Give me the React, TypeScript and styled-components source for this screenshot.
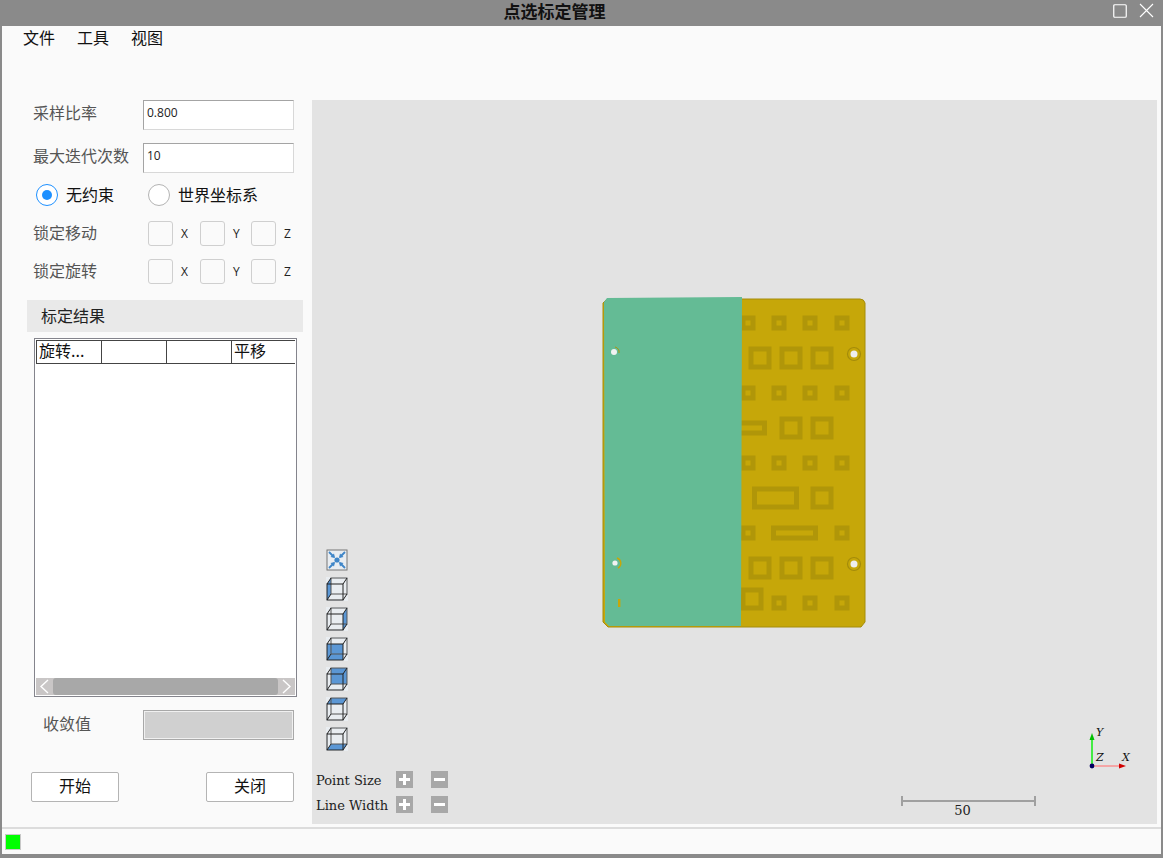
import React from "react";
import styled, { createGlobalStyle } from "styled-components";

const GlobalStyle = createGlobalStyle`
  html, body {
    margin: 0;
    padding: 0;
    background: #8a8a8a;
  }
  * {
    box-sizing: border-box;
  }
`;

const CJK = `"Noto Sans CJK SC", "Noto Sans", sans-serif`;
const SERIF = `"DejaVu Serif", "Liberation Serif", serif`;

const Window = styled.div`
  width: 1163px;
  height: 858px;
  display: flex;
  flex-direction: column;
  background: #8a8a8a;
  font-family: ${CJK};
  overflow: hidden;
`;

const TitleBar = styled.div`
  height: 26px;
  flex: none;
  display: flex;
  align-items: flex-start;
`;

const Title = styled.div`
  width: 1109px;
  text-align: center;
  font-size: 17px;
  font-weight: 700;
  color: #111;
  line-height: 21px;
`;

const WindowButtons = styled.div`
  display: flex;
  align-items: center;
  gap: 12px;
  margin-left: 4px;
  padding-top: 3px;
`;

const Body = styled.div`
  flex: 1;
  min-height: 0;
  margin: 0 2px 4px 2px;
  display: flex;
  flex-direction: column;
  background: #fafafa;
`;

const MenuBar = styled.div`
  height: 74px;
  flex: none;
  display: flex;
  align-items: flex-start;
  gap: 22px;
  padding-left: 21px;
`;

const MenuItem = styled.div`
  font-size: 16px;
  line-height: 22px;
  color: #111;
`;

const Main = styled.div`
  flex: 1;
  min-height: 0;
  display: flex;
`;

const SidePanel = styled.div`
  width: 310px;
  flex: none;
  display: flex;
  flex-direction: column;
`;

const FieldRow = styled.div`
  display: flex;
  align-items: center;
  height: 30px;
  margin-bottom: 13px;
  padding-left: 31px;
`;

const Label = styled.div<{ $width: number; $lift: number }>`
  width: ${(p) => p.$width}px;
  flex: none;
  margin-bottom: ${(p) => p.$lift}px;
  font-size: 16px;
  line-height: 24px;
  color: #555;
  white-space: nowrap;
`;

const NumberInput = styled.div`
  width: 151px;
  height: 30px;
  display: flex;
  align-items: center;
  padding: 0 0 6px 3px;
  background: #fff;
  border: 1px solid #d8d8d8;
  border-top-color: #a4a4a4;
  border-left-color: #a4a4a4;
  font-family: "Open Sans", sans-serif;
  font-size: 12px;
  color: #222;
`;

const RadioRow = styled.div`
  display: flex;
  align-items: center;
  height: 24px;
  margin-top: -3px;
  padding-left: 34px;
`;

const RadioItem = styled.div<{ $width: number }>`
  width: ${(p) => p.$width}px;
  display: flex;
  align-items: center;
  gap: 8px;
  font-size: 16px;
  line-height: 24px;
  color: #111;
`;

const RadioText = styled.span`
  margin-bottom: 3px;
`;

const RadioCircle = styled.span<{ $checked?: boolean }>`
  width: 22px;
  height: 22px;
  flex: none;
  border-radius: 50%;
  display: flex;
  align-items: center;
  justify-content: center;
  background: #fff;
  border: 1px solid ${(p) => (p.$checked ? "#1e90ff" : "#b4b4b4")};
  &::after {
    content: "";
    width: 10px;
    height: 10px;
    border-radius: 50%;
    background: ${(p) => (p.$checked ? "#1e90ff" : "transparent")};
  }
`;

const LockRow = styled.div<{ $top: number }>`
  display: flex;
  align-items: center;
  height: 25px;
  margin-top: ${(p) => p.$top}px;
  padding-left: 31px;
`;

const CheckBox = styled.span`
  width: 25px;
  height: 25px;
  flex: none;
  border: 1px solid #cfcfcf;
  border-radius: 3px;
  background: #fafafa;
`;

const AxisName = styled.span<{ $width: number }>`
  width: ${(p) => p.$width}px;
  flex: none;
  padding-left: 8px;
  font-family: "Open Sans", sans-serif;
  font-size: 12px;
  color: #222;
`;

const SectionHeader = styled.div`
  margin: 16px 9px 0 25px;
  height: 32px;
  padding: 0 0 2px 14px;
  display: flex;
  align-items: center;
  background: #e9e9e9;
  font-size: 16px;
  color: #222;
`;

const TableFrame = styled.div`
  margin: 6px 0 0 32px;
  width: 263px;
  height: 359px;
  display: flex;
  flex-direction: column;
  padding: 1px;
  background: #fff;
  border: 1px solid #84848c;
`;

const TableHead = styled.div`
  display: grid;
  grid-template-columns: repeat(4, 65px);
  height: 24px;
  flex: none;
  border-top: 1px solid #444;
  border-bottom: 1px solid #444;
`;

const HeadCell = styled.div`
  border-left: 1px solid #444;
  padding-left: 2px;
  font-size: 16px;
  line-height: 19px;
  color: #111;
  white-space: nowrap;
`;

const TableBody = styled.div`
  flex: 1;
`;

const ScrollBar = styled.div`
  height: 17px;
  flex: none;
  display: flex;
  align-items: stretch;
  background: #c9c6c6;
`;

const ScrollArrow = styled.div`
  width: 17px;
  flex: none;
  display: flex;
  align-items: center;
  justify-content: center;
`;

const ScrollThumb = styled.div`
  flex: 1;
  border-radius: 3px;
  background: #a8a8a8;
`;

const ResultRow = styled.div`
  display: flex;
  align-items: center;
  height: 30px;
  margin-top: 13px;
  padding-left: 41px;
`;

const ResultBox = styled.div`
  width: 151px;
  height: 30px;
  background: #d0d0d0;
  border: 1px solid #a8a8a8;
  box-shadow: inset 0 0 0 1px #f0f0f0;
`;

const ActionRow = styled.div`
  display: flex;
  justify-content: space-between;
  margin: 32px 0 0 29px;
  width: 263px;
`;

const ActionButton = styled.button`
  width: 88px;
  height: 30px;
  padding: 0 0 4px;
  background: #fff;
  border: 1px solid #b4b4b4;
  border-radius: 2px;
  font-family: ${CJK};
  font-size: 16px;
  line-height: 22px;
  color: #111;
`;

const Viewport = styled.div`
  position: relative;
  flex: 1;
  height: 724px;
  margin-right: 4px;
  background: #e3e3e3;
`;

/* the 3d scene: everything in here sits on a free canvas */
const Model = styled.svg`
  position: absolute;
  left: 283px;
  top: 190px;
`;

const ViewTools = styled.div`
  position: absolute;
  left: 14px;
  top: 449px;
  display: flex;
  flex-direction: column;
  gap: 6px;
`;

const ViewIcon = styled.svg`
  display: block;
`;

const SizeControls = styled.div`
  position: absolute;
  left: 4px;
  top: 671px;
  display: flex;
  flex-direction: column;
  gap: 8px;
`;

const SizeRow = styled.div`
  display: flex;
  align-items: center;
  height: 17px;
`;

const SizeLabel = styled.div`
  width: 80px;
  padding-top: 2px;
  font-family: ${SERIF};
  font-size: 13px;
  color: #222;
  white-space: nowrap;
`;

const StepButton = styled.span<{ $plus?: boolean }>`
  position: relative;
  width: 17px;
  height: 17px;
  margin-right: 18px;
  background: #a8a8a8;
  &::before {
    content: "";
    position: absolute;
    left: 3px;
    right: 3px;
    top: 7px;
    height: 3px;
    background: #fff;
  }
  &::after {
    content: "";
    display: ${(p) => (p.$plus ? "block" : "none")};
    position: absolute;
    top: 3px;
    bottom: 3px;
    left: 7px;
    width: 3px;
    background: #fff;
  }
`;

const ScaleBar = styled.svg`
  position: absolute;
  left: 588px;
  top: 694px;
`;

const Axes = styled.svg`
  position: absolute;
  left: 770px;
  top: 622px;
`;

const StatusBar = styled.div`
  height: 27px;
  flex: none;
  display: flex;
  align-items: center;
  padding-left: 3px;
  border-top: 2px solid #dcdcdc;
`;

const StatusLight = styled.div`
  width: 16px;
  height: 16px;
  background: #00ff00;
  border: 1px solid #c8c8c8;
`;

type Face = "left" | "right" | "front" | "back" | "top" | "bottom";

const FACE_POINTS: Record<Face, string> = {
  left: "1,7 5,1 5,17 1,23",
  right: "17,7 21,1 21,17 17,23",
  front: "1,7 17,7 17,23 1,23",
  back: "5,1 21,1 21,17 5,17",
  top: "1,7 5,1 21,1 17,7",
  bottom: "1,23 5,17 21,17 17,23",
};

const CubeIcon = ({ face }: { face: Face }) => (
  <ViewIcon width="22" height="24" viewBox="0 0 22 24">
    <rect x="0" y="0" width="22" height="24" fill="#e9edf1" />
    <polygon points={FACE_POINTS[face]} fill="#5b97d5" />
    <g fill="none" stroke="#222" strokeWidth="1">
      <rect x="5" y="1" width="16" height="16" stroke="#555" />
      <path d="M1 7L5 1M17 7L21 1M1 23L5 17M17 23L21 17" />
      <rect x="1" y="7" width="16" height="16" />
    </g>
  </ViewIcon>
);

const FitIcon = () => (
  <ViewIcon width="22" height="22" viewBox="0 0 22 22">
    <rect x="1" y="1" width="20" height="20" fill="#e9edf1" stroke="#777" />
    <circle cx="11" cy="11" r="2.6" fill="#3f86c8" />
    <g stroke="#3f86c8" strokeWidth="1.8">
      <path d="M3 3L8 8M19 3L14 8M3 19L8 14M19 19L14 14" />
    </g>
    <g fill="#3f86c8">
      <polygon points="9,9 4.5,8 8,4.5" />
      <polygon points="13,9 17.5,8 14,4.5" />
      <polygon points="9,13 4.5,14 8,17.5" />
      <polygon points="13,13 17.5,14 14,17.5" />
    </g>
  </ViewIcon>
);

const PAD = "#b09609";
const BOARD = "#c6a709";

// rings on the board, in model coordinates: centre x, centre y, width, height, wall
const RINGS: [number, number, number, number, number][] = [
  [153, 33, 15, 15, 5], [184, 33, 15, 15, 5], [215, 33, 15, 15, 5], [247, 33, 15, 15, 5],
  [165, 68, 23, 23, 5], [196, 68, 23, 23, 5], [227, 68, 23, 23, 5],
  [153, 103, 15, 15, 5], [184, 103, 15, 15, 5], [215, 103, 15, 15, 5], [247, 103, 15, 15, 5],
  [146, 138, 52, 15, 5], [196, 138, 23, 23, 5], [227, 138, 23, 23, 5],
  [153, 173, 15, 15, 5], [184, 173, 15, 15, 5], [215, 173, 15, 15, 5], [247, 173, 15, 15, 5],
  [180.5, 208, 47, 23, 5], [227, 208, 23, 23, 5],
  [153, 243, 15, 15, 5], [199.5, 243, 47, 15, 5], [247, 243, 15, 15, 5],
  [165, 278, 23, 23, 5], [196, 278, 23, 23, 5], [227, 278, 23, 23, 5],
  [157, 309, 23, 23, 5], [184, 313, 15, 15, 5], [215, 313, 15, 15, 5], [247, 313, 15, 15, 5],
];

const BoardModel = () => (
  <Model width="272" height="340" viewBox="0 0 272 340">
    <path
      d="M12 9H265Q269 9 270 13V332L266 337H13L8 332V13Z"
      fill={BOARD}
      stroke="#a58c0a"
      strokeWidth="1"
    />
    {RINGS.map(([x, y, w, h, wall], i) => (
      <g key={i}>
        <rect x={x - w / 2} y={y - h / 2} width={w} height={h} fill={PAD} />
        <rect
          x={x - w / 2 + wall}
          y={y - h / 2 + wall}
          width={w - wall * 2}
          height={h - wall * 2}
          fill={BOARD}
        />
      </g>
    ))}
    <circle cx="259" cy="64" r="6.5" fill={BOARD} stroke="#a58c0a" strokeWidth="1.2" />
    <circle cx="259" cy="64" r="3.5" fill="#eeeeee" />
    <circle cx="259" cy="274" r="6.5" fill={BOARD} stroke="#a58c0a" strokeWidth="1.2" />
    <circle cx="259" cy="274" r="3.5" fill="#eeeeee" />
    <path d="M12 8L147 7L146 336L14 336L10 332L9 12Z" fill="#64bb95" />
    <circle cx="19" cy="62" r="3" fill="#f2f2f2" />
    <path d="M20 57A5 5 0 0 1 24 63" fill="none" stroke="#b09609" strokeWidth="1" />
    <circle cx="20" cy="273" r="2.6" fill="#f2f2f2" />
    <path d="M22 268A5.5 5.5 0 0 1 23 278" fill="none" stroke="#c6a709" strokeWidth="1.5" />
    <rect x="23" y="309" width="2.4" height="8" fill="#c6a709" />
  </Model>
);

const AxisTriad = () => (
  <Axes width="60" height="60" viewBox="0 0 60 60">
    <line x1="10" y1="44" x2="10" y2="16" stroke="#00ee00" strokeWidth="1.4" />
    <polygon points="10,11 7.5,18 12.5,18" fill="#00c000" />
    <line x1="10" y1="44" x2="38" y2="44" stroke="#f4a6a6" strokeWidth="2" />
    <polygon points="44,44 37,41.5 37,46.5" fill="#d00000" />
    <circle cx="10" cy="44" r="2.4" fill="#000060" />
    <g fontFamily={SERIF} fontSize="11" fontStyle="italic" fill="#111">
      <text x="14" y="14">Y</text>
      <text x="14" y="39">Z</text>
      <text x="40" y="39">X</text>
    </g>
  </Axes>
);

const Scale = () => (
  <ScaleBar width="140" height="32" viewBox="0 0 140 32">
    <g stroke="#a0a0a0" strokeWidth="2">
      <line x1="2" y1="7" x2="135" y2="7" />
      <line x1="2" y1="2" x2="2" y2="12" />
      <line x1="135" y1="2" x2="135" y2="12" />
    </g>
    <text x="62.5" y="21" textAnchor="middle" fontFamily={SERIF} fontSize="13" fill="#222">
      50
    </text>
  </ScaleBar>
);

const Chevron = ({ left }: { left?: boolean }) => (
  <svg width="11" height="15" viewBox="0 0 11 15">
    <path
      d={left ? "M9 1L2 7.5L9 14" : "M2 1L9 7.5L2 14"}
      fill="none"
      stroke="#fff"
      strokeWidth="1.4"
    />
  </svg>
);

const AXES = ["X", "Y", "Z"];
const AXIS_WIDTHS = [27, 26, 26];
const FACES: Face[] = ["left", "right", "front", "back", "top", "bottom"];

const LockLine = ({ name, top }: { name: string; top: number }) => (
  <LockRow $top={top}>
    <Label $width={115} $lift={3}>{name}</Label>
    {AXES.map((a, i) => (
      <React.Fragment key={a}>
        <CheckBox />
        <AxisName $width={AXIS_WIDTHS[i]}>{a}</AxisName>
      </React.Fragment>
    ))}
  </LockRow>
);

export default function App() {
  return (
    <Window>
      <GlobalStyle />
      <TitleBar>
        <Title>点选标定管理</Title>
        <WindowButtons>
          <svg width="14" height="14" viewBox="0 0 14 14">
            <rect x="0.75" y="0.75" width="12.5" height="12.5" rx="1" fill="none" stroke="#fff" strokeWidth="1.2" />
          </svg>
          <svg width="15" height="15" viewBox="0 0 15 15">
            <path d="M1 1L14 14M14 1L1 14" fill="none" stroke="#fff" strokeWidth="1.1" />
          </svg>
        </WindowButtons>
      </TitleBar>
      <Body>
        <MenuBar>
          <MenuItem>文件</MenuItem>
          <MenuItem>工具</MenuItem>
          <MenuItem>视图</MenuItem>
        </MenuBar>
        <Main>
          <SidePanel>
            <FieldRow>
              <Label $width={110} $lift={6}>采样比率</Label>
              <NumberInput>0.800</NumberInput>
            </FieldRow>
            <FieldRow>
              <Label $width={110} $lift={7}>最大迭代次数</Label>
              <NumberInput>10</NumberInput>
            </FieldRow>
            <RadioRow>
              <RadioItem $width={112}>
                <RadioCircle $checked />
                <RadioText>无约束</RadioText>
              </RadioItem>
              <RadioItem $width={120}>
                <RadioCircle />
                <RadioText>世界坐标系</RadioText>
              </RadioItem>
            </RadioRow>
            <LockLine name="锁定移动" top={14} />
            <LockLine name="锁定旋转" top={13} />
            <SectionHeader>标定结果</SectionHeader>
            <TableFrame>
              <TableHead>
                <HeadCell>旋转...</HeadCell>
                <HeadCell />
                <HeadCell />
                <HeadCell>平移</HeadCell>
              </TableHead>
              <TableBody />
              <ScrollBar>
                <ScrollArrow>
                  <Chevron left />
                </ScrollArrow>
                <ScrollThumb />
                <ScrollArrow>
                  <Chevron />
                </ScrollArrow>
              </ScrollBar>
            </TableFrame>
            <ResultRow>
              <Label $width={100} $lift={4}>收敛值</Label>
              <ResultBox />
            </ResultRow>
            <ActionRow>
              <ActionButton>开始</ActionButton>
              <ActionButton>关闭</ActionButton>
            </ActionRow>
          </SidePanel>
          <Viewport>
            <BoardModel />
            <ViewTools>
              <FitIcon />
              {FACES.map((f) => (
                <CubeIcon key={f} face={f} />
              ))}
            </ViewTools>
            <SizeControls>
              <SizeRow>
                <SizeLabel>Point Size</SizeLabel>
                <StepButton $plus />
                <StepButton />
              </SizeRow>
              <SizeRow>
                <SizeLabel>Line Width</SizeLabel>
                <StepButton $plus />
                <StepButton />
              </SizeRow>
            </SizeControls>
            <Scale />
            <AxisTriad />
          </Viewport>
        </Main>
        <StatusBar>
          <StatusLight />
        </StatusBar>
      </Body>
    </Window>
  );
}
